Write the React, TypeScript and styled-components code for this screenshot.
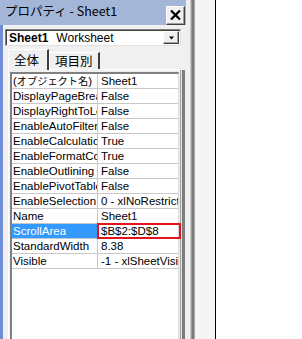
import React from "react";
import styled, { createGlobalStyle } from "styled-components";

const Global = createGlobalStyle`
  html, body { margin: 0; padding: 0; background: #ffffff; }
  body { font-family: "Liberation Sans", "Noto Sans CJK JP", sans-serif; font-size: 11.5px; color: #000; }
`;

const Screen = styled.div`
  display: flex;
  width: 302px;
  height: 339px;
  overflow: hidden;
`;

const Panel = styled.div`
  width: 186px;
  display: flex;
  flex-direction: column;
  background: #f0f0f0;
`;

const TitleBar = styled.div`
  height: 25px;
  background: #a3b6d8;
  display: flex;
  align-items: center;
  justify-content: space-between;
  padding: 0 1px 0 5px;
  box-sizing: border-box;
  flex-shrink: 0;
`;

const TitleText = styled.span`
  font-family: "Noto Sans CJK JP", sans-serif;
  font-size: 12.5px;
  line-height: 1;
  padding-bottom: 2px;
`;

const CloseButton = styled.div`
  width: 19px;
  height: 19px;
  margin-top: 5px;
  box-sizing: border-box;
  background: #f0f0f0;
  border-top: 1px solid #ffffff;
  border-left: 1px solid #ffffff;
  border-right: 1px solid #404040;
  border-bottom: 1px solid #404040;
  box-shadow: inset -1px -1px 0 #a0a0a0;
  display: flex;
  align-items: center;
  justify-content: center;
`;

const Body = styled.div`
  flex: 1;
  display: flex;
  flex-direction: column;
  border-left: 3px solid #6f8ed6;
  padding: 4px 0 0 2px;
  min-height: 0;
`;

const Combo = styled.div`
  width: 176px;
  height: 17px;
  box-sizing: border-box;
  background: #fff;
  border-top: 1px solid #808080;
  border-left: 1px solid #808080;
  border-right: 1px solid #e0e0e0;
  border-bottom: 1px solid #e0e0e0;
  box-shadow: inset 1px 1px 0 #404040;
  display: flex;
  align-items: center;
  padding-left: 3px;
  font-size: 12px;
`;

const ComboBold = styled.span`
  font-weight: bold;
  margin-right: 8px;
`;

const ComboText = styled.span`
  flex: 1;
`;

const DropButton = styled.div`
  width: 16px;
  height: 13px;
  margin-right: 1px;
  box-sizing: border-box;
  background: #f0f0f0;
  border-top: 1px solid #ffffff;
  border-left: 1px solid #ffffff;
  border-right: 1px solid #404040;
  border-bottom: 1px solid #404040;
  box-shadow: inset -1px -1px 0 #a0a0a0;
  display: flex;
  align-items: center;
  justify-content: center;
`;

const TabStrip = styled.div`
  display: flex;
  align-items: flex-end;
  margin-top: 3px;
  padding-left: 3px;
  height: 20px;
`;

const Tab = styled.div<{ $active?: boolean }>`
  font-family: "Noto Sans CJK JP", sans-serif;
  font-size: 12.5px;
  height: ${(p) => (p.$active ? 21 : 17)}px;
  box-sizing: border-box;
  padding: 0 ${(p) => (p.$active ? 8 : 5)}px 0 5px;
  border-top: 1px solid #ffffff;
  border-left: 1px solid #ffffff;
  border-right: 2px solid #404040;
  background: #f0f0f0;
  display: flex;
  align-items: center;
  line-height: 1;
  margin-bottom: ${(p) => (p.$active ? -1 : 0)}px;
  position: relative;
  z-index: ${(p) => (p.$active ? 1 : 0)};
`;

const TabPage = styled.div`
  flex: 1;
  margin-left: 3px;
  width: 177px;
  box-sizing: border-box;
  border-top: 1px solid #ffffff;
  border-left: 1px solid #ffffff;
  padding: 2px 6px 0 1px;
  box-shadow: inset -3px 0 0 #7c7c7c, inset -4px 0 0 #e4e4e4, inset -5px 0 0 #a0a0a0;
  display: flex;
  min-height: 0;
`;

const Grid = styled.div`
  flex: 1;
  background: #fff;
  border-top: 2px solid #808080;
  border-left: 2px solid #808080;
  border-right: 1px solid #d8d8d8;
  box-sizing: border-box;
  display: flex;
  flex-direction: column;
`;

const Row = styled.div`
  display: grid;
  grid-template-columns: 86px 1fr;
  height: 15px;
  border-bottom: 1px solid #c8c8c8;
  box-sizing: border-box;
  position: relative;
`;

const NameCell = styled.div<{ $selected?: boolean }>`
  background: ${(p) => (p.$selected ? "#3399ff" : "transparent")};
  color: ${(p) => (p.$selected ? "#fff" : "#000")};
  border-right: 1px solid #c8c8c8;
  padding-left: 1px;
  white-space: nowrap;
  overflow: hidden;
  line-height: 14px;
`;

const Kana = styled.span`
  font-size: 10.2px;
`;

const ValueCell = styled.div`
  padding-left: 3px;
  white-space: nowrap;
  overflow: hidden;
  line-height: 14px;
`;

const Mark = styled.div`
  position: absolute;
  left: 85px;
  top: -1px;
  width: 84px;
  height: 16px;
  border: 2px solid #e3121b;
  box-sizing: border-box;
  z-index: 2;
`;

const Splitter = styled.div`
  width: 9px;
  background: #f0f0f0;
  box-sizing: border-box;
  box-shadow: inset -1px 0 0 #a8a8a8, inset -3px 0 0 #7c7c7c, inset -4px 0 0 #9c9c9c, inset -5px 0 0 #c8c8c8;
`;

const Gutter = styled.div`
  width: 20px;
  background: #f5f5f5;
  border-right: 1px solid #000;
`;

const Canvas = styled.div`
  flex: 1;
  background: #fff;
`;

const rows: [string, string][] = [
  ["DisplayPageBreaks", "False"],
  ["DisplayRightToLeft", "False"],
  ["EnableAutoFilter", "False"],
  ["EnableCalculation", "True"],
  ["EnableFormatConditionsCalculation", "True"],
  ["EnableOutlining", "False"],
  ["EnablePivotTable", "False"],
  ["EnableSelection", "0 - xlNoRestrictions"],
  ["Name", "Sheet1"],
  ["ScrollArea", "$B$2:$D$8"],
  ["StandardWidth", "8.38"],
  ["Visible", "-1 - xlSheetVisible"],
];

export default function App() {
  return (
    <>
      <Global />
      <Screen>
        <Panel>
          <TitleBar>
            <TitleText>プロパティ - Sheet1</TitleText>
            <CloseButton>
              <svg width="11" height="10" viewBox="0 0 11 10">
                <path d="M1 0.5 L10 9.5 M10 0.5 L1 9.5" stroke="#000" strokeWidth="2.2" />
              </svg>
            </CloseButton>
          </TitleBar>
          <Body>
            <Combo>
              <ComboBold>Sheet1</ComboBold>
              <ComboText>Worksheet</ComboText>
              <DropButton>
                <svg width="7" height="4" viewBox="0 0 7 4">
                  <path d="M1 0.5 H6 L3.5 3.5 Z" fill="#000" />
                </svg>
              </DropButton>
            </Combo>
            <TabStrip>
              <Tab $active>全体</Tab>
              <Tab>項目別</Tab>
            </TabStrip>
            <TabPage>
              <Grid>
                <Row>
                  <NameCell>
                    (<Kana>オブジェクト名</Kana>)
                  </NameCell>
                  <ValueCell>Sheet1</ValueCell>
                </Row>
                {rows.map(([n, v]) => (
                  <Row key={n}>
                    <NameCell $selected={n === "ScrollArea"}>{n}</NameCell>
                    <ValueCell>{v}</ValueCell>
                    {n === "ScrollArea" && <Mark />}
                  </Row>
                ))}
              </Grid>
            </TabPage>
          </Body>
        </Panel>
        <Splitter />
        <Gutter />
        <Canvas />
      </Screen>
    </>
  );
}
